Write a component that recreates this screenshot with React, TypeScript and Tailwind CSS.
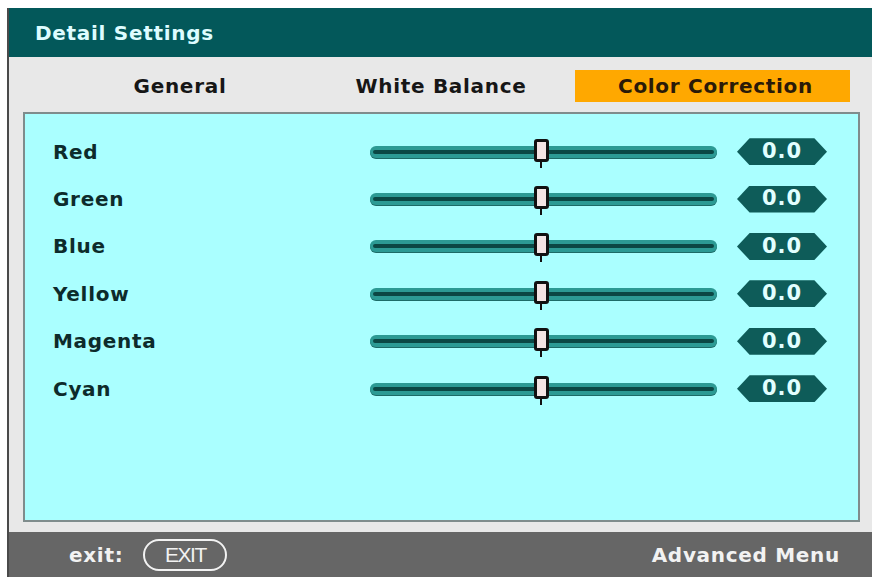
const rows = ["Red", "Green", "Blue", "Yellow", "Magenta", "Cyan"];

function Slider() {
  return (
    <div className="relative w-[347px] h-[24px] flex items-center">
      <div className="w-full h-[12px] rounded-full bg-[#2c9a94] flex items-center px-[3px] shadow-[0_1px_0_#1d6b67]">
        <div className="w-full h-[4px] rounded-full bg-[#0b4744]" />
      </div>
      <div className="absolute left-[164px] top-[-1px] w-[15px] h-[23px] rounded-[3px] border-[3px] border-[#111] bg-[#f3e4e4]" />
      <div className="absolute left-[170px] top-[21px] w-[2px] h-[7px] bg-[#111]" />
    </div>
  );
}

function Badge() {
  return (
    <div className="w-[90px] h-[27px] bg-[#0e5c59] flex items-center justify-center text-[#e2ffff] text-[21px] font-bold tracking-[1px] [clip-path:polygon(14%_0,86%_0,100%_50%,86%_100%,14%_100%,0_50%)]">
      0.0
    </div>
  );
}

export default function App() {
  return (
    <div className="w-[876px] h-[579px] bg-white pt-[8px] pl-[7px] pr-[4px] pb-[2px] font-['DejaVu_Sans',sans-serif] tracking-[0.7px]">
      <div className="h-full flex flex-col border-l-2 border-[#4a4a4a] bg-[#e8e8e8]">
        <div className="h-[49px] bg-[#03585a] flex items-center pl-[26px] text-[20px] font-bold text-[#defcff]">
          Detail Settings
        </div>
        <div className="h-[55px] flex items-center pt-[2px] text-[20px] font-bold text-[#161616]">
          <div className="ml-[33px] w-[276px] text-center">General</div>
          <div className="w-[246px] text-center">White Balance</div>
          <div className="ml-[11px] w-[275px] h-[32px] bg-[#ffa800] flex items-center justify-center pl-[6px] text-[#2a1a08]">
            Color Correction
          </div>
        </div>
        <div className="flex-1 flex">
          <div className="ml-[14px] mr-[12px] mb-[10px] flex-1 border-2 border-[#7f8c8c] bg-[#aaffff] pt-[14px]">
            {rows.map((r) => (
              <div key={r} className="h-[47.4px] flex items-center pl-[28px]">
                <div className="w-[317px] text-[20px] font-bold text-[#0d2b2b]">{r}</div>
                <Slider />
                <div className="ml-[20px]">
                  <Badge />
                </div>
              </div>
            ))}
          </div>
        </div>
        <div className="h-[45px] bg-[#666666] flex items-center pl-[60px] pr-[32px] text-[#f2f2f2]">
          <span className="text-[20px] font-bold">exit:</span>
          <span className="ml-[20px] w-[84px] h-[32px] rounded-full border-2 border-[#f2f2f2] flex items-center justify-center text-[21px] font-['Liberation_Sans',sans-serif] tracking-[-1.5px]">
            EXIT
          </span>
          <span className="ml-auto text-[20px] font-bold">Advanced Menu</span>
        </div>
      </div>
    </div>
  );
}
